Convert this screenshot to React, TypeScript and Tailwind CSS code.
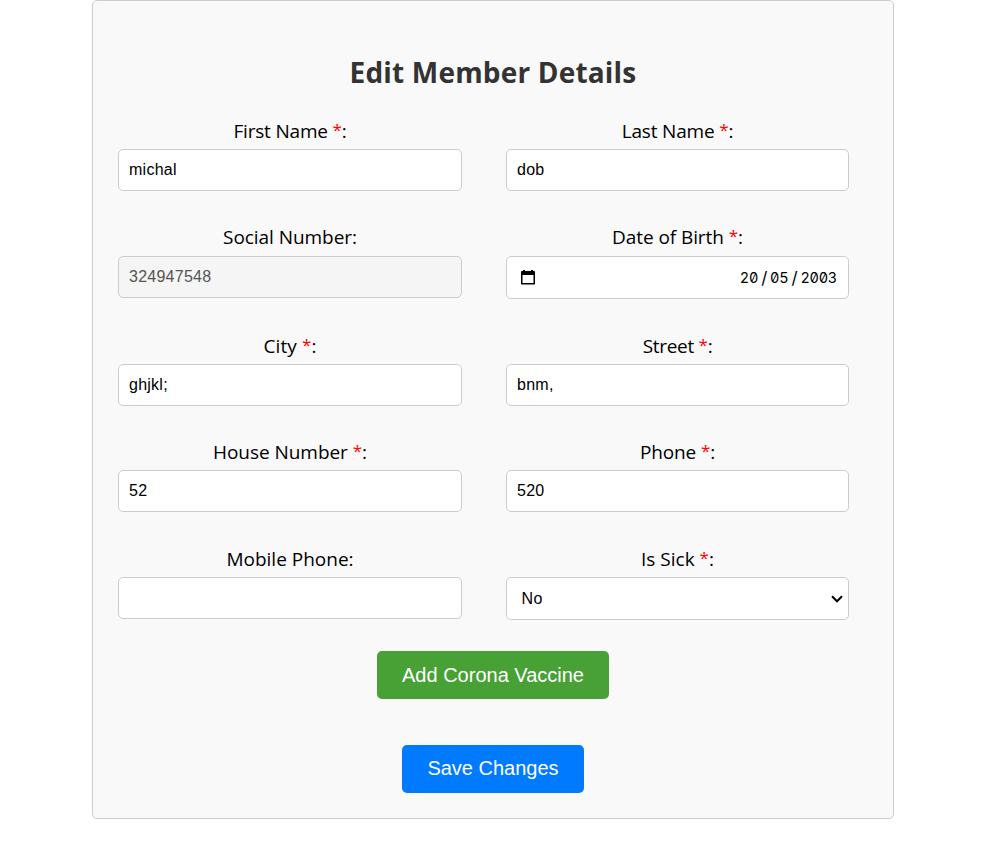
import React from "react";

type LabelProps = { text: string; required?: boolean; className: string };

function Label({ text, required, className }: LabelProps) {
  return (
    <span className="flex justify-center font-['Open_Sans','Noto_Sans',sans-serif] text-[19px] leading-[27px] whitespace-pre text-black">
      <span className={className}>
        {text}
        {required && (
          <>
            {" "}
            <span className="align-[2px] text-[17px] leading-none text-[#ff0000]">*</span>
          </>
        )}
        :
      </span>
    </span>
  );
}

type FieldProps = LabelProps & { value: string; disabled?: boolean };

function TextField({ text, required, className, value, disabled }: FieldProps) {
  return (
    <label className="flex flex-col justify-between">
      <Label text={text} required={required} className={className} />
      <input
        type="text"
        defaultValue={value}
        disabled={disabled}
        className="mt-1 block h-[42px] w-full rounded-[5px] border border-[#cccccc] bg-white px-[10px] pb-px text-[16px] tracking-[0.25px] text-black outline-none disabled:bg-[#f5f5f5] disabled:text-[#545454]"
      />
    </label>
  );
}

function DateField() {
  return (
    <div>
      <Label text="Date of Birth" required className="tracking-[-0.08px]" />
      <div className="mt-[5px] flex h-[43px] items-center justify-between rounded-[5px] border border-[#cccccc] bg-white pr-[11px] pl-[14px]">
        <svg width="14" height="15" viewBox="0 0 14 15" aria-hidden="true">
          <path d="M2 0h2v1h6V0h2v1h1.2q.8 0 .8.8v11.9q0 .8-.8.8H.8q-.8 0-.8-.8V1.800q0-.8.8-.8H2zM1.500 5v8h11V5z" fill="#000" fillRule="evenodd" />
        </svg>
        <span className="flex gap-[2px] font-['Inter',sans-serif] text-[14.5px] leading-5 tracking-[-0.25px] [font-feature-settings:'zero','tnum']">
          <span>20</span>
          <span className="w-[8px] text-center text-[17px]">/</span>
          <span>05</span>
          <span className="w-[8px] text-center text-[17px]">/</span>
          <span>2003</span>
        </span>
      </div>
    </div>
  );
}

function SickField() {
  return (
    <div>
      <Label text="Is Sick" required className="" />
      <div className="mt-1 flex h-[43px] items-center justify-between rounded-[5px] border border-[#cccccc] bg-white pr-[5px] pl-[14.6px] text-[16px] tracking-[0.3px]">
        <span>No</span>
        <svg width="12" height="8" viewBox="0 0 12 8" fill="none" stroke="#000" strokeWidth="2" aria-hidden="true">
          <path d="M1 1.300 6 6.300l5-5" />
        </svg>
      </div>
    </div>
  );
}

const row = "grid grid-cols-[344px_343px] items-start gap-x-11";

export default function App() {
  return (
    <main className="flex h-[843px] justify-center bg-white pl-[3px] font-['Liberation_Sans',Arial,sans-serif] text-black">
      <form className="h-[819px] w-[802px] rounded-[5px] border border-[#cccccc] bg-[#f9f9f9] px-[25px] pt-[51px]">
        <h2 className="flex h-[66px] justify-center font-['Open_Sans','Noto_Sans',sans-serif] text-[28px] leading-[40px] font-bold tracking-[0.18px] whitespace-nowrap text-[#333333]">
          Edit Member Details
        </h2>
        <div className={row}>
          <TextField text="First Name" required className="tracking-[-0.2px]" value="michal" />
          <TextField text="Last Name" required className="tracking-[-0.17px]" value="dob" />
        </div>
        <div className={row + " mt-[33px]"}>
          <div className="grid [&>label]:gap-px">
            <TextField text="Social Number" className="tracking-[-0.06px]" value="324947548" disabled />
          </div>
          <DateField />
        </div>
        <div className={row + " mt-[34px]"}>
          <TextField text="City" required className="tracking-[0.1px]" value="ghjkl;" />
          <TextField text="Street" required className="tracking-[-0.3px]" value="bnm," />
        </div>
        <div className={row + " mt-[33px]"}>
          <TextField text="House Number" required className="tracking-[-0.04px]" value="52" />
          <TextField text="Phone" required className="tracking-[-0.15px]" value="520" />
        </div>
        <div className={row + " mt-[34px]"}>
          <TextField text="Mobile Phone" className="" value="" />
          <SickField />
        </div>
        <div className="mt-[31px] flex flex-col items-center gap-[46px]">
          <button type="button" className="h-12 w-[232px] rounded-[5px] bg-[#48a135] text-[20px] text-white">
            Add Corona Vaccine
          </button>
          <button type="button" className="h-12 w-[182px] rounded-[5px] bg-[#007bff] pb-[2px] text-[20px] text-white">
            Save Changes
          </button>
        </div>
      </form>
    </main>
  );
}
